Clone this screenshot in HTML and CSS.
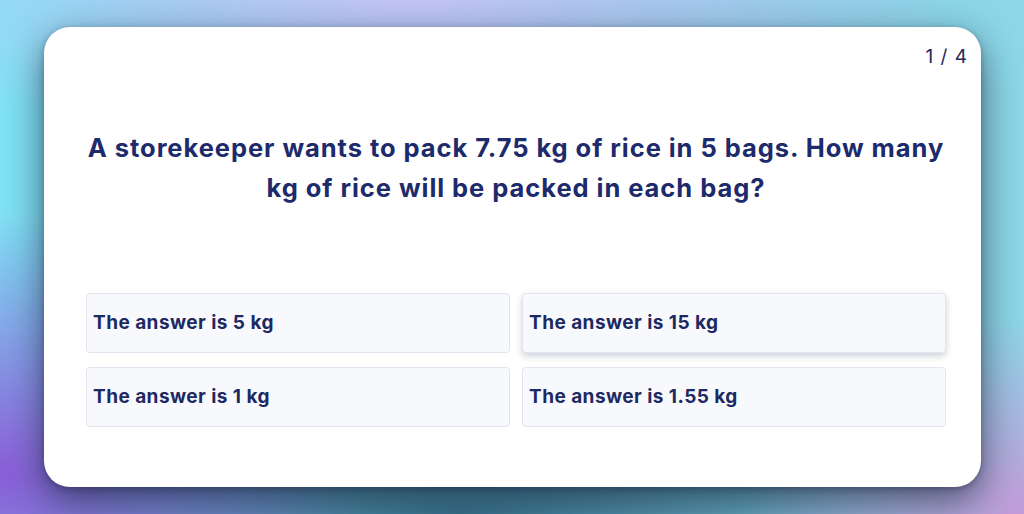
FILE: index.html
```html
<!DOCTYPE html>
<html lang="en">
<head>
<meta charset="utf-8">
<link rel="stylesheet" href="styles.css">
<title>Quiz</title>
</head>
<body>
<main class="card">
  <div class="counter">1 / 4</div>
  <h1 class="question">A storekeeper wants to pack 7.75 kg of rice in 5 bags. How many kg of rice will be packed in each bag?</h1>
  <div class="answers">
    <div class="answer">The answer is 5 kg</div>
    <div class="answer answer-hover">The answer is 15 kg</div>
    <div class="answer">The answer is 1 kg</div>
    <div class="answer">The answer is 1.55 kg</div>
  </div>
</main>
</body>
</html>
```
FILE: styles.css
```css
html, body {
  margin: 0;
  height: 100%;
}
body {
  box-sizing: border-box;
  padding: 27px 43px 27px 44px;
  font-family: "Inter", "Noto Sans", sans-serif;
  background-color: #70bcd4;
  background-image:
    radial-gradient(ellipse 360px 260px at 0% 92%, #8a5ed8 0%, rgba(138,94,216,0.55) 45%, rgba(138,94,216,0) 100%),
    radial-gradient(ellipse 280px 200px at 100% 100%, #c29ad8 0%, rgba(194,154,216,0) 100%),
    radial-gradient(ellipse 560px 150px at 40% 0%, #c4c4f6 0%, rgba(196,196,246,0) 100%),
    radial-gradient(ellipse 520px 110px at 45% 100%, #3a7690 0%, rgba(58,118,144,0) 100%),
    linear-gradient(90deg, #80e2f6 0%, #80c8e0 50%, #8cd8e8 100%);
}
.card {
  box-sizing: border-box;
  height: 460px;
  background: #ffffff;
  border-radius: 26px;
  box-shadow: 0 14px 38px rgba(15, 25, 45, 0.62), 0 2px 6px rgba(15, 25, 45, 0.3);
  padding: 17px 13px 0 42px;
  display: flex;
  flex-direction: column;
}
.counter {
  align-self: flex-end;
  font-size: 19px;
  line-height: 26px;
  color: #1f2a5c;
  letter-spacing: 1px;
}
.question {
  margin: 57.5px 22px 0 0;
  text-align: center;
  font-size: 25.5px;
  line-height: 40px;
  font-weight: 700;
  color: #1d2a6b;
  letter-spacing: 0.95px;
}
.answers {
  margin: 85px 22px 0 0;
  display: grid;
  grid-template-columns: 1fr 1fr;
  column-gap: 12px;
  row-gap: 14px;
}
.answer {
  box-sizing: border-box;
  height: 60px;
  display: flex;
  align-items: center;
  padding: 0 6px;
  background: #f8f9fc;
  border: 1px solid #e2e5ef;
  border-radius: 4px;
  font-size: 19px;
  font-weight: 700;
  color: #1d2a62;
  letter-spacing: 0.45px;
}
.answer-hover {
  box-shadow: 0 3px 7px rgba(30, 40, 80, 0.22);
}
```
